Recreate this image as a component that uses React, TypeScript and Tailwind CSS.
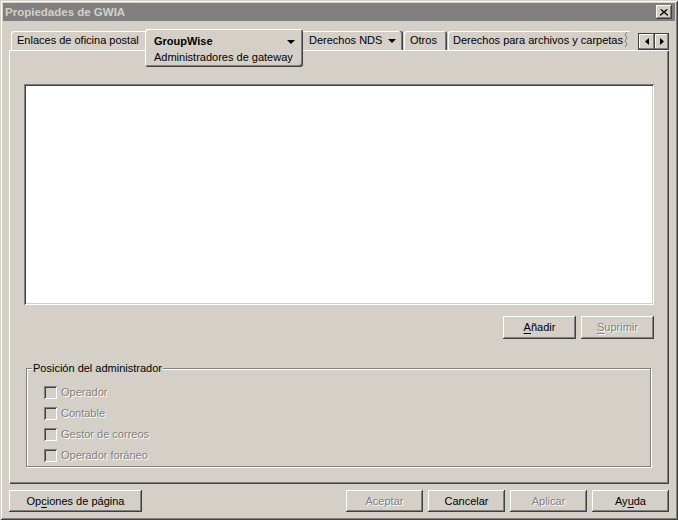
import React from "react";

const FONT = "font-['Liberation_Sans',Arial,sans-serif] text-[11px] leading-[13px]";
const RAISED =
  "shadow-[inset_-1px_-1px_#404040,inset_1px_1px_#ffffff,inset_-2px_-2px_#808080]";
const DIS = "text-[#808080] [text-shadow:1px_1px_0_#ffffff]";

function Btn({
  w,
  h,
  disabled,
  children,
}: {
  w: string;
  h: string;
  disabled?: boolean;
  children: React.ReactNode;
}) {
  return (
    <div
      className={`${w} ${h} ${RAISED} bg-[#d4d0c8] flex items-center justify-center ${
        disabled ? DIS : "text-black"
      }`}
    >
      <span>{children}</span>
    </div>
  );
}

function U({ children }: { children: React.ReactNode }) {
  return <span className="underline underline-offset-[2px]">{children}</span>;
}

function Down() {
  return (
    <svg width="8" height="4" viewBox="0 0 8 4" className="block">
      <polygon points="0,0 8,0 4,4" fill="#000" />
    </svg>
  );
}

function Check({ label }: { label: string }) {
  return (
    <div className="flex items-center h-[13px]">
      <div className="w-[13px] h-[13px] bg-[#d4d0c8] shadow-[inset_1px_1px_#808080,inset_-1px_-1px_#ffffff,inset_2px_2px_#404040,inset_-2px_-2px_#d4d0c8]" />
      <span className={`ml-[4px] ${DIS}`}>{label}</span>
    </div>
  );
}

export default function App() {
  return (
    <div
      className={`${FONT} w-[678px] h-[520px] bg-[#d4d0c8] p-[3px] flex flex-col shadow-[inset_1px_1px_#d4d0c8,inset_-1px_-1px_#404040,inset_2px_2px_#ffffff,inset_-2px_-2px_#808080] text-black`}
    >
      {/* Title bar */}
      <div className="h-[18px] bg-[#808080] flex items-center justify-between pl-[2px] pr-[3px]">
        <span className="font-bold text-[#d4d0c8] text-[11.5px]">Propiedades de GWIA</span>
        <div className={`w-[16px] h-[14px] bg-[#d4d0c8] ${RAISED} flex items-center justify-center`}>
          <svg width="8" height="7" viewBox="0 0 8 7" className="block">
            <path d="M0.5 0.5 L7.5 6.5 M1.5 0.5 L8 6 M7.5 0.5 L0.5 6.5 M6.5 0.5 L0 6" stroke="#000" strokeWidth="1" fill="none" />
          </svg>
        </div>
      </div>

      {/* Tabs row */}
      <div className="mt-[8px] h-[21px] flex items-end pl-[8px]">
        <div className="w-[134px] h-[19px] pl-[6px] pt-[3px] rounded-tl-[3px] shadow-[inset_1px_1px_#ffffff] whitespace-nowrap">
          Enlaces de oficina postal
        </div>
        <div className="relative z-10 w-[158px] h-[38px] -mb-[17px] rounded-[3px] bg-[#d4d0c8] shadow-[inset_1px_1px_#ffffff,inset_-1px_-1px_#404040,inset_-2px_-2px_#808080] pl-[9px] pr-[8px] pt-[6px] flex flex-col">
          <div className="flex items-center justify-between">
            <span className="font-bold">GroupWise</span>
            <Down />
          </div>
          <div className="mt-[3px] whitespace-nowrap">Administradores de gateway</div>
        </div>
        <div className="w-[100px] h-[19px] pl-[6px] pr-[7px] pt-[3px] rounded-tr-[3px] shadow-[inset_-1px_0_#404040,inset_-2px_0_#808080,inset_0_1px_#ffffff] flex items-start justify-between">
          <span>Derechos NDS</span>
          <span className="mt-[5px]">
            <Down />
          </span>
        </div>
        <div className="ml-[1px] w-[43px] h-[19px] pl-[6px] pt-[3px] rounded-t-[3px] shadow-[inset_1px_1px_#ffffff,inset_-1px_0_#404040,inset_-2px_0_#808080]">
          Otros
        </div>
        <div className="ml-[1px] w-[182px] h-[19px] pl-[5px] pt-[3px] rounded-tl-[3px] shadow-[inset_1px_1px_#ffffff] flex overflow-hidden whitespace-nowrap">
          <span>Derechos para archivos y carpetas</span>
          <svg width="4" height="16" viewBox="0 0 4 16" className="ml-[1px] shrink-0 -mt-[2px]">
            <path d="M3 0 L1 3 L3 6 L1 9 L3 12 L1 15" stroke="#808080" strokeWidth="1" fill="none" />
          </svg>
        </div>
        <div className="ml-[8px] flex h-[17px] self-end mb-[0px] border border-[#404040]">
          <div className={`w-[15px] h-[15px] bg-[#d4d0c8] shadow-[inset_-1px_-1px_#808080,inset_1px_1px_#ffffff] flex items-center justify-center`}>
            <svg width="4" height="7" viewBox="0 0 4 7" className="block">
              <polygon points="4,0 4,7 0,3.5" fill="#000" />
            </svg>
          </div>
          <div className={`w-[14px] h-[15px] bg-[#d4d0c8] border-l border-[#404040] shadow-[inset_-1px_-1px_#808080,inset_1px_1px_#ffffff] flex items-center justify-center`}>
            <svg width="4" height="7" viewBox="0 0 4 7" className="block">
              <polygon points="0,0 0,7 4,3.5" fill="#000" />
            </svg>
          </div>
        </div>
      </div>

      {/* Panel */}
      <div className="ml-[6px] w-[660px] h-[434px] shadow-[inset_1px_1px_#ffffff,inset_-1px_-1px_#404040,inset_-2px_-2px_#808080] px-[15px] pt-[34px] flex flex-col">
        <div className="w-[630px] h-[221px] bg-white shadow-[inset_1px_1px_#808080,inset_-1px_-1px_#ffffff,inset_2px_2px_#404040,inset_-2px_-2px_#d4d0c8]" />
        <div className="mt-[11px] flex justify-end gap-[5px]">
          <Btn w="w-[73px]" h="h-[23px]">
            <U>A</U>ñadir
          </Btn>
          <Btn w="w-[73px]" h="h-[23px]" disabled>
            <U>S</U>uprimir
          </Btn>
        </div>
        <div className="relative mt-[29px] ml-[2px] w-[625px] h-[99px] border border-[#808080] shadow-[inset_1px_1px_#ffffff,1px_1px_#ffffff] pl-[17px] pt-[17px] flex flex-col gap-[8px]">
          <span className="absolute -top-[7px] left-[5px] px-[1px] bg-[#d4d0c8]">
            Posición del administrador
          </span>
          <Check label="Operador" />
          <Check label="Contable" />
          <Check label="Gestor de correos" />
          <Check label="Operador foráneo" />
        </div>
      </div>

      {/* Bottom buttons */}
      <div className="mt-[6px] ml-[6px] mr-[6px] flex items-center justify-between">
        <Btn w="w-[133px]" h="h-[22px]">
          Op<U>c</U>iones de página
        </Btn>
        <div className="flex gap-[5px]">
          <Btn w="w-[77px]" h="h-[22px]" disabled>
            Aceptar
          </Btn>
          <Btn w="w-[77px]" h="h-[22px]">
            Cancelar
          </Btn>
          <Btn w="w-[77px]" h="h-[22px]" disabled>
            Aplicar
          </Btn>
          <Btn w="w-[77px]" h="h-[22px]">
            Ay<U>u</U>da
          </Btn>
        </div>
      </div>
    </div>
  );
}
